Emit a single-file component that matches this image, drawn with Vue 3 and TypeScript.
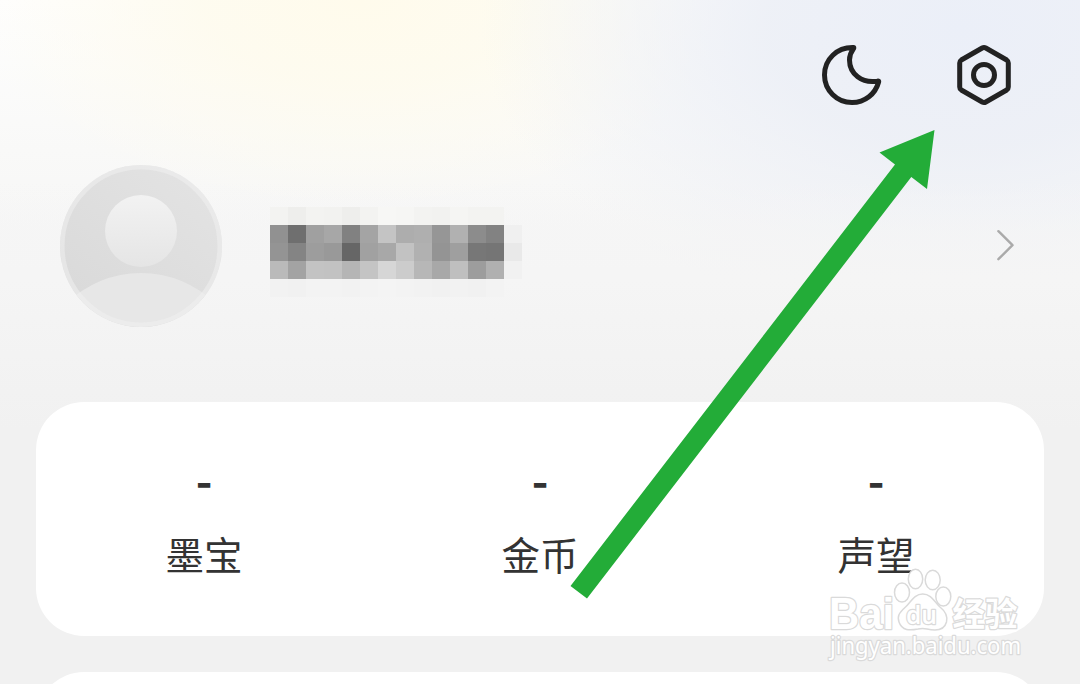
<script setup lang="ts">
interface Stat {
  label: string
  value: string
}

const stats: Stat[] = [
  { label: '墨宝', value: '-' },
  { label: '金币', value: '-' },
  { label: '声望', value: '-' },
]

const maskRows: string[][] = [
  ['#f3f3f1', '#eeeeec', '#f3f3f1', '#f2f2f0', '#eeeeec', '#f3f3f1', '#f7f7f5', '#f6f6f4', '#f3f3f1', '#f2f2f0', '#f5f5f3', '#f3f3f1', '#f3f3f1', 'transparent'],
  ['#919191', '#6f6f6f', '#a0a0a0', '#a7a7a7', '#818181', '#a4a4a4', '#c4c4c4', '#adadad', '#afafaf', '#969696', '#b1b1b1', '#8c8c8c', '#828282', '#f0f0f0'],
  ['#949494', '#848484', '#9d9d9d', '#999999', '#666666', '#a1a1a1', '#a8a8a8', '#c2c2c2', '#b1b1b1', '#949494', '#9f9f9f', '#777777', '#757575', '#e9e9e9'],
  ['#bababa', '#a3a3a3', '#c3c3c3', '#c2c2c2', '#b5b5b5', '#c4c4c4', '#d6d6d6', '#cccccc', '#b7b7b7', '#a8a8a8', '#bfbfbf', '#9d9d9d', '#b0b0b0', '#f1f1f1'],
  ['#f2f2f2', '#f1f1f1', '#f3f3f3', '#f3f3f3', '#f2f2f2', '#f3f3f3', '#f4f4f4', '#f3f3f3', '#f2f2f2', '#f1f1f1', '#f2f2f2', '#f1f1f1', '#f3f3f3', 'transparent'],
]
</script>

<template>
  <main class="page">
    <header class="toolbar">
      <svg class="icon" viewBox="0 0 64 64">
        <path d="M33.3 4.6C17 4.2 4.5 16.3 4.5 32C4.5 47.2 16.8 59.5 32 59.5C44.8 59.5 55.5 51 58.6 39C58.9 37.9 58.2 38 57.2 38.2C42 40.6 29.5 31 29.5 17C29.5 13 31 9 33.3 6Q34.3 4.7 33.3 4.6Z" />
      </svg>
      <svg class="icon" viewBox="0 0 64 64">
        <path d="M30.2 5Q32 4 33.8 5L54.7 17Q56.3 18 56.3 20V44Q56.3 46 54.7 47L33.8 59Q32 60 30.2 59L9.3 47Q7.7 46 7.7 44V20Q7.7 18 9.3 17Z" />
        <circle cx="32" cy="32" r="10.5" />
      </svg>
    </header>

    <section class="profile">
      <svg class="avatar" viewBox="0 0 162 162">
        <defs>
          <linearGradient id="face" x1="0" y1="0" x2="0" y2="1">
            <stop offset="0" stop-color="#f2f2f2" />
            <stop offset="1" stop-color="#e5e5e5" />
          </linearGradient>
          <linearGradient id="disc" x1="1" y1="0" x2="0.2" y2="1">
            <stop offset="0" stop-color="#e4e4e4" />
            <stop offset="1" stop-color="#d9d9d9" />
          </linearGradient>
          <clipPath id="round"><circle cx="81" cy="81" r="81" /></clipPath>
        </defs>
        <circle cx="81" cy="81" r="81" fill="url(#disc)" />
        <g clip-path="url(#round)">
          <circle cx="81" cy="214" r="106" fill="#e7e7e7" />
        </g>
        <circle cx="81" cy="66" r="36" fill="url(#face)" />
        <circle cx="81" cy="81" r="78.7" fill="none" stroke="#f2f2f2" stroke-opacity="0.5" stroke-width="4.6" />
      </svg>
      <div class="mask">
        <template v-for="(row, r) in maskRows" :key="r">
          <span v-for="(color, c) in row" :key="c" :style="{ background: color }"></span>
        </template>
      </div>
      <svg class="chevron" viewBox="0 0 20 34">
        <path d="M2.4 2.2L16.5 16.2L2.4 30.2" />
      </svg>
    </section>

    <section class="card stats">
      <div v-for="stat in stats" :key="stat.label" class="stat">
        <span class="value">{{ stat.value }}</span>
        <span class="label">{{ stat.label }}</span>
      </div>
    </section>
    <section class="card next"></section>

    <svg class="arrow" viewBox="0 0 1080 684">
      <polygon points="934.5,130 879.5,152.5 895,164.5 570.5,586 587,598.5 911.3,177 927,189" />
    </svg>

    <svg class="watermark" viewBox="0 0 210 110">
      <text x="10" y="68.5" class="brand" textLength="65" lengthAdjust="spacingAndGlyphs">Bai</text>
      <g class="paw">
        <ellipse cx="83" cy="32.5" rx="7.5" ry="9.5" />
        <ellipse cx="96.5" cy="19" rx="7.2" ry="9.7" />
        <ellipse cx="113.7" cy="20" rx="7.5" ry="9.7" />
        <ellipse cx="124.3" cy="36.5" rx="7.5" ry="9.5" />
        <path d="M103.7 34C95 34 92 42 86.500 47C80 53 78 56 80 62C83 71 91 70.500 99 69Q103.500 68 108 69C116 71 125 71 127.500 62C129 56 126 51 121 47C115.500 42 112.500 34 103.700 34Z" />
      </g>
      <text x="87" y="64" class="du" textLength="31" lengthAdjust="spacingAndGlyphs">du</text>
      <text x="133.5" y="66" class="cn" textLength="65" lengthAdjust="spacingAndGlyphs">经验</text>
      <text x="11" y="94" class="site" textLength="191" lengthAdjust="spacingAndGlyphs">jingyan.baidu.com</text>
    </svg>
  </main>
</template>

<style>
body {
  margin: 0;
  background: #f1f1f1;
}
</style>

<style scoped>
.page {
  position: relative;
  box-sizing: border-box;
  width: 1080px;
  height: 684px;
  padding: 0 36px;
  overflow: hidden;
  font-family: "Noto Sans CJK SC", sans-serif;
  background:
    linear-gradient(180deg, rgba(245, 245, 245, 0) 180px, #f5f5f5 280px, #f1f1f1 430px),
    radial-gradient(ellipse 480px 290px at 960px 30px, #ebeff8 0, rgba(236, 239, 246, 0.9) 40%, rgba(242, 244, 247, 0) 100%),
    radial-gradient(ellipse 390px 210px at 360px 0, #fffbec 0, rgba(254, 251, 238, 0.9) 40%, rgba(252, 250, 243, 0) 100%),
    linear-gradient(180deg, #fefefe 0, #f9f9f8 150px, #f5f5f5 270px);
}

.toolbar {
  display: flex;
  justify-content: flex-end;
  gap: 68px;
  height: 122px;
  padding: 43px 28px 0 0;
  box-sizing: border-box;
}

.icon {
  width: 64px;
  height: 64px;
  margin-right: 0;
  fill: none;
  stroke: #222;
  stroke-width: 5;
  stroke-linejoin: round;
}

.profile {
  display: flex;
  align-items: center;
  height: 248px;
  margin-bottom: 32px;
  padding: 0 28px 0 24px;
}

.avatar {
  width: 162px;
  height: 162px;
}

.mask {
  display: grid;
  grid-template-columns: repeat(14, 18px);
  grid-auto-rows: 18px;
  margin: 12px auto 0 48px;
}

.chevron {
  width: 20px;
  height: 34px;
  fill: none;
  stroke: #aaa;
  stroke-width: 2.4;
  stroke-linecap: round;
  stroke-linejoin: round;
}

.card {
  border-radius: 48px;
  background: #fff;
}

.stats {
  display: grid;
  grid-template-columns: repeat(3, 1fr);
  height: 234px;
}

.stat {
  display: flex;
  flex-direction: column;
  align-items: center;
  padding-top: 47px;
  color: #333;
}

.value {
  height: 76px;
  font: 700 45px/60px "Noto Sans CJK SC", sans-serif;
}

.label {
  font-size: 38.5px;
  line-height: 56px;
}

.next {
  height: 120px;
  margin-top: 36px;
}

.arrow {
  position: absolute;
  inset: 0;
  width: 1080px;
  height: 684px;
  fill: #23ac38;
}

.watermark {
  position: absolute;
  left: 819px;
  top: 560px;
  width: 210px;
  height: 110px;
}

.watermark text {
  fill: #fff;
  stroke: #dadada;
  stroke-width: 2.5px;
  stroke-linejoin: round;
  paint-order: stroke;
}

.brand {
  font: 700 44px "Liberation Sans", sans-serif;
}

.watermark .du {
  font: 600 26px "Open Sans", sans-serif;
}

.cn {
  font: 700 33px "Noto Sans CJK SC", sans-serif;
}

.site {
  font: 400 23px "Noto Sans", sans-serif;
}

.paw {
  fill: #fff;
  stroke: #dadada;
  stroke-width: 1.5;
}
</style>
